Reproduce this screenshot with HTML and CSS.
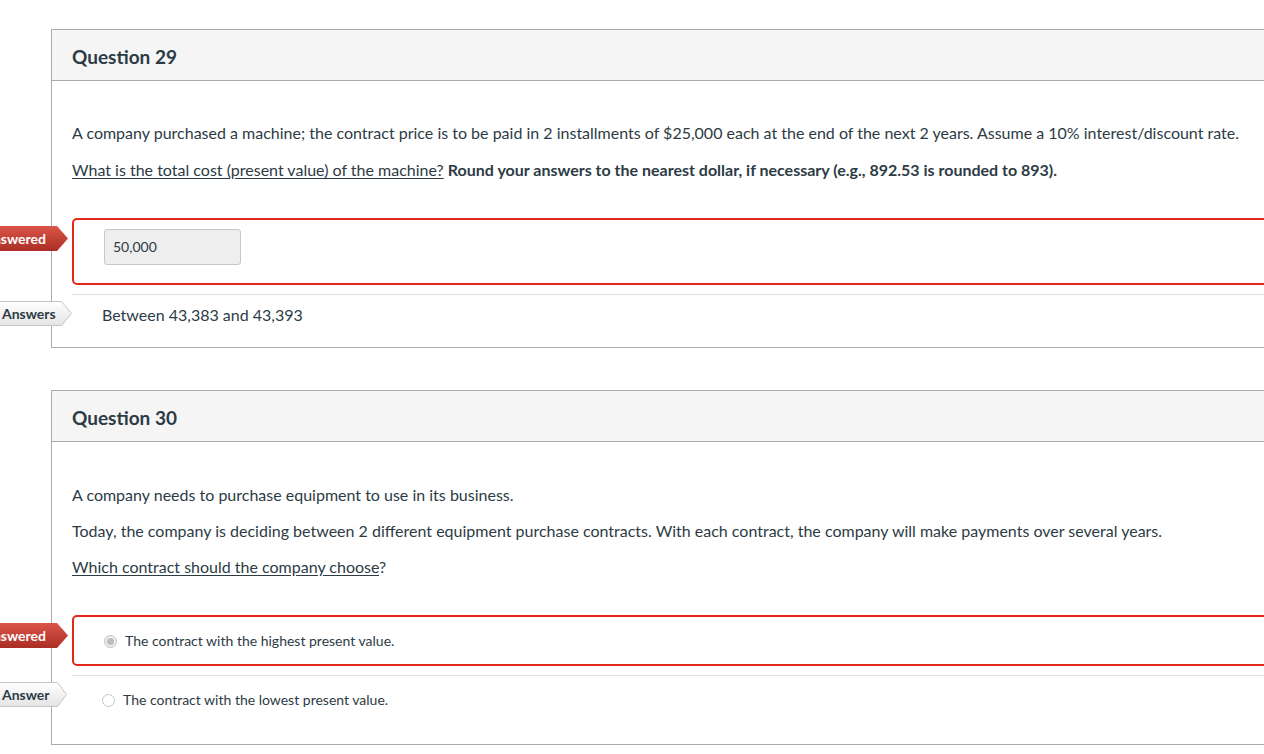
FILE: index.html
```html
<!DOCTYPE html>
<html lang="en">
<head>
<meta charset="utf-8">
<title>Quiz results</title>
<link rel="stylesheet" href="styles.css">
</head>
<body>
<main class="quiz">
  <section class="question">
    <header class="question__header"><h2 class="question__title">Question 29</h2></header>
    <div class="question__body">
      <p>A company purchased a machine; the contract price is to be paid in 2 installments of $25,000 each at the end of the next 2 years. Assume a 10% interest/discount rate.</p>
      <p><u>What is the total cost (present value) of the machine?</u> <strong>Round your answers to the nearest dollar, if necessary (e.g., 892.53 is rounded to 893).</strong></p>
      <div class="answers answers--q29">
        <div class="answer answer--wrong answer--input">
          <div class="arrow arrow--wrong">
            <svg class="arrow__shape" viewBox="0 0 98 25" preserveAspectRatio="none"><defs><linearGradient id="rg1" x1="0" y1="0" x2="0" y2="1"><stop offset="0" stop-color="#dc5548"/><stop offset="1" stop-color="#aa2e26"/></linearGradient></defs><polygon points="0,0 87,0 98,12.5 87,25 0,25" fill="url(#rg1)"/></svg>
            <span class="arrow__text">Answered</span>
          </div>
          <div class="input-box">50,000</div>
        </div>
        <div class="answer answer--text">
          <div class="arrow arrow--correct arrow--wide">
            <svg class="arrow__shape" viewBox="0 0 102 25" preserveAspectRatio="none"><defs><linearGradient id="gg1" x1="0" y1="0" x2="0" y2="1"><stop offset="0" stop-color="#ffffff"/><stop offset="1" stop-color="#e4e4e4"/></linearGradient></defs><polygon points="-2,0.5 91.5,0.5 101.5,12.5 91.5,24.5 -2,24.5" fill="url(#gg1)" stroke="#c4c4c4" stroke-width="1"/></svg>
            <span class="arrow__text">Answers</span>
          </div>
          Between 43,383 and 43,393
        </div>
      </div>
    </div>
  </section>

  <section class="question">
    <header class="question__header"><h2 class="question__title">Question 30</h2></header>
    <div class="question__body question__body--choice">
      <p>A company needs to purchase equipment to use in its business.</p>
      <p>Today, the company is deciding between 2 different equipment purchase contracts. With each contract, the company will make payments over several years.</p>
      <p><u>Which contract should the company choose</u>?</p>
      <div class="answers">
        <div class="answer answer--wrong answer--choice">
          <div class="arrow arrow--wrong">
            <svg class="arrow__shape" viewBox="0 0 98 25" preserveAspectRatio="none"><defs><linearGradient id="rg2" x1="0" y1="0" x2="0" y2="1"><stop offset="0" stop-color="#dc5548"/><stop offset="1" stop-color="#aa2e26"/></linearGradient></defs><polygon points="0,0 87,0 98,12.5 87,25 0,25" fill="url(#rg2)"/></svg>
            <span class="arrow__text">Answered</span>
          </div>
          <span class="radio radio--checked"></span>
          <span class="choice-text">The contract with the highest present value.</span>
        </div>
        <div class="answer answer--choice answer--last">
          <div class="arrow arrow--correct">
            <svg class="arrow__shape" viewBox="0 0 97 25" preserveAspectRatio="none"><defs><linearGradient id="gg2" x1="0" y1="0" x2="0" y2="1"><stop offset="0" stop-color="#ffffff"/><stop offset="1" stop-color="#e4e4e4"/></linearGradient></defs><polygon points="-2,0.5 87.5,0.5 96.5,12.5 87.5,24.5 -2,24.5" fill="url(#gg2)" stroke="#c4c4c4" stroke-width="1"/></svg>
            <span class="arrow__text">Answer</span>
          </div>
          <span class="radio"></span>
          <span class="choice-text">The contract with the lowest present value.</span>
        </div>
      </div>
    </div>
  </section>
</main>
</body>
</html>
```

FILE: styles.css
```css
html, body {
  margin: 0;
  padding: 0;
  background: #ffffff;
  overflow: hidden;
}

body {
  font-family: Lato, "Open Sans", "Liberation Sans", sans-serif;
  color: #2d3b45;
  width: 1264px;
  height: 754px;
}

.quiz {
  padding-top: 29px;
  padding-left: 51px;
}

.question {
  width: 1300px;
  border: 1px solid #aaaaaa;
  background: #ffffff;
}

.question + .question {
  margin-top: 42px;
}

.question__header {
  background: #f5f5f5;
  border-bottom: 1px solid #aaaaaa;
  height: 50px;
  display: flex;
  align-items: center;
  padding-left: 20px;
}

.question__title {
  margin: 0;
  padding-top: 4px;
  font-size: 19px;
  font-weight: 700;
  line-height: 24px;
  color: #2d3b45;
}

.question__body {
  padding: 40px 0 12px 20px;
  font-size: 16px;
}

.question__body--choice {
  padding-top: 41px;
  padding-bottom: 20px;
}

.question__body p {
  margin: 0 0 12px;
  line-height: 24px;
}

.question__body p + p {
  margin-top: 13px;
}

.question__body--choice p + p {
  margin-top: 12px;
}

.question__body u {
  text-decoration: underline;
  text-underline-offset: 2px;
}

.answers {
  margin-top: 36px;
}

.answer {
  position: relative;
  padding: 8px 30px;
  line-height: 24px;
}

.answer + .answer {
  margin-top: 9px;
  border-top: 1px solid #dddddd;
}

.answer--wrong {
  border: 2px solid #e3271b;
  border-radius: 5px;
}

.answer--input {
  padding: 9px 30px 18px;
}

.answer--text {
  font-size: 16px;
}

.answer--choice {
  display: flex;
  align-items: center;
  padding: 12px 30px 11px;
  font-size: 14px;
}

.answer--last {
  padding-bottom: 12px;
}

.input-box {
  width: 127px;
  height: 34px;
  padding-left: 8px;
  background: #eeeeee;
  border: 1px solid #c8c8c8;
  border-radius: 3px;
  font-size: 14px;
  line-height: 34px;
  color: #2d3b45;
}

.radio {
  width: 11px;
  height: 11px;
  border: 1px solid #c6c6c6;
  border-radius: 50%;
  background: #ffffff;
  position: relative;
  flex: none;
}

.radio--checked {
  background: #eeeeee;
  border-color: #c2c2c2;
}

.radio--checked::after {
  content: "";
  position: absolute;
  left: 2px;
  top: 2px;
  width: 7px;
  height: 7px;
  border-radius: 50%;
  background: #bdbdbd;
}

.choice-text {
  margin-left: 8px;
  color: #2d3b45;
}

/* result arrows hanging off the left edge */
.arrow {
  position: absolute;
  top: 6px;
  height: 25px;
  font-size: 14px;
  font-weight: 700;
  line-height: 25px;
}

.arrow__shape {
  position: absolute;
  left: 0;
  top: 0;
  width: 100%;
  height: 100%;
  display: block;
}

.arrow__text {
  position: relative;
  display: block;
}

.arrow--wrong {
  left: -104px;
  width: 98px;
  color: #ffffff;
  text-align: right;
}

.arrow--wrong .arrow__text {
  padding-right: 22px;
}

.arrow--correct {
  top: 6px;
  left: -102px;
  width: 97px;
  color: #2d3b45;
}

.arrow--wide {
  width: 102px;
}

.arrow--correct .arrow__text {
  padding-left: 32px;
}
```
